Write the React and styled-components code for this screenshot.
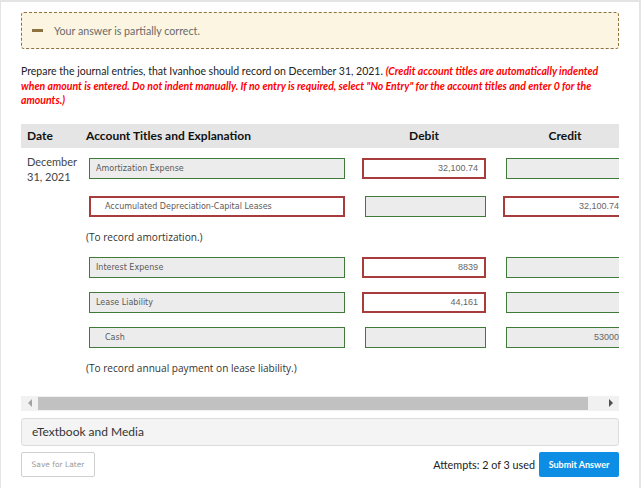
import React from "react";
import styled, { createGlobalStyle } from "styled-components";

const GlobalStyle = createGlobalStyle`
  html, body { margin: 0; padding: 0; background: #fff; }
  body { font-family: Lato, "Liberation Sans", sans-serif; }
  * { box-sizing: border-box; }
`;

const Page = styled.div`
  width: 641px;
  height: 488px;
  border-top: 2px solid #e4e4e4;
  border-left: 1px solid #e4e4e4;
  border-right: 2px solid #e4e4e4;
  padding: 10px 20px 0 20px;
  overflow: hidden;
`;

const Feedback = styled.div`
  height: 37px;
  border: 1px dashed #8e7341;
  border-radius: 3px;
  background: #fcf5e1;
  display: flex;
  align-items: center;
  padding-left: 10px;
`;

const Minus = styled.span`
  display: block;
  width: 11px;
  height: 3px;
  background: #8e7341;
  margin-right: 11px;
`;

const FeedbackText = styled.span`
  font-size: 10.7px;
  color: #6a6a6a;
`;

const Instructions = styled.p`
  margin: 15px 0 0;
  font-size: 10.5px;
  line-height: 14.5px;
  color: #222;
`;

const Warn = styled.em`
  color: #f00;
  font-weight: bold;
`;

const TableClip = styled.div`
  margin-top: 16px;
  width: 598px;
  overflow: hidden;
`;

const Grid = styled.div`
  width: 616px;
`;

const cols = "65px 269px 142px 140px";

const HeaderRow = styled.div`
  display: grid;
  grid-template-columns: ${cols};
  height: 24px;
  align-items: center;
  background: #e5e5e5;
  font-size: 12px;
  font-weight: bold;
  color: #111;
`;

const HeadCell = styled.div`
  padding-left: ${(p) => p.$pl || 0}px;
  padding-right: ${(p) => p.$pr || 0}px;
  text-align: ${(p) => p.$align || "left"};
`;

const Row = styled.div`
  display: grid;
  grid-template-columns: ${cols};
  align-items: start;
  padding-top: ${(p) => p.$pt}px;
`;

const DateCell = styled.div`
  padding: 6px 0 0 6px;
  font-size: 11px;
  line-height: 15px;
  color: #444;
`;

const Cell = styled.div`
  display: flex;
  justify-content: ${(p) => (p.$end ? "flex-end" : "flex-start")};
  padding-top: ${(p) => p.$pt || 0}px;
  padding-right: ${(p) => p.$mr || 0}px;
`;

const Field = styled.div`
  height: 21px;
  display: flex;
  align-items: center;
  border: ${(p) => (p.$wrong ? "2px solid #a83b3b" : "1px solid #3f7a3a")};
  background: ${(p) => (p.$wrong ? "#fff" : "#ececec")};
  white-space: nowrap;
  overflow: hidden;
`;

const AccountField = styled(Field)`
  width: 256px;
  margin-left: 3px;
  padding-left: ${(p) => (p.$indent ? 15 : 6) - (p.$wrong ? 1 : 0)}px;
  font-family: "DejaVu Sans", Verdana, sans-serif;
  font-size: 8px;
  color: #5a5a5a;
`;

const AmountField = styled(Field)`
  width: ${(p) => (p.$wrong ? 124 : 121)}px;
  justify-content: flex-end;
  padding-right: ${(p) => (p.$wrong ? 6 : 7)}px;
  font-family: "Liberation Sans", Arial, sans-serif;
  font-size: 9px;
  color: #666;
`;

const Explanation = styled.div`
  grid-column: 2 / -1;
  padding-top: 12px;
  font-family: "Open Sans", "Liberation Sans", sans-serif;
  font-size: 10.1px;
  line-height: 16px;
  color: #333;
`;

const Scrollbar = styled.div`
  margin-top: 20px;
  height: 15px;
  background: #f1f1f1;
  display: flex;
  align-items: center;
`;

const ArrowBox = styled.div`
  width: ${(p) => p.$w}px;
  height: 15px;
  display: flex;
  align-items: center;
  justify-content: center;
`;

const Arrow = styled.span`
  width: 0;
  height: 0;
  border-top: 4px solid transparent;
  border-bottom: 4px solid transparent;
  ${(p) =>
    p.$dir === "left"
      ? "border-right: 4px solid #a3a3a3;"
      : "border-left: 4px solid #505050;"}
`;

const Thumb = styled.div`
  width: 550px;
  height: 13px;
  background: #c1c1c1;
`;

const Spacer = styled.div`
  flex: 1;
`;

const Media = styled.div`
  margin-top: 7px;
  height: 28px;
  border: 1px solid #dcdcdc;
  border-radius: 3px;
  background: #f4f4f4;
  display: flex;
  align-items: center;
  padding-left: 10px;
  font-size: 12px;
  color: #333;
`;

const Footer = styled.div`
  margin-top: 6px;
  display: flex;
  align-items: center;
  justify-content: space-between;
`;

const SaveButton = styled.button`
  width: 74px;
  height: 25px;
  border: 1px solid #cfcfcf;
  border-radius: 2px;
  background: #fff;
  font-family: "DejaVu Sans", Verdana, sans-serif;
  font-size: 7.5px;
  color: #9a9a9a;
  padding: 0;
`;

const Right = styled.div`
  display: flex;
  align-items: center;
`;

const Attempts = styled.span`
  font-size: 10.8px;
  color: #222;
  margin-right: 4px;
`;

const SubmitButton = styled.button`
  width: 80px;
  height: 25px;
  border: none;
  border-radius: 2px;
  background: #0d8de3;
  color: #fff;
  font-family: Lato, sans-serif;
  font-weight: bold;
  font-size: 9px;
  padding: 0;
`;

export default function App() {
  return (
    <>
      <GlobalStyle />
      <Page>
        <Feedback>
          <Minus />
          <FeedbackText>Your answer is partially correct.</FeedbackText>
        </Feedback>
        <Instructions>
          Prepare the journal entries, that Ivanhoe should record on December 31, 2021.{" "}
          <Warn>
            (Credit account titles are automatically indented when amount is entered. Do not indent
            manually. If no entry is required, select "No Entry" for the account titles and enter 0 for
            the amounts.)
          </Warn>
        </Instructions>
        <TableClip>
          <Grid>
            <HeaderRow>
              <HeadCell $pl={6}>Date</HeadCell>
              <HeadCell>Account Titles and Explanation</HeadCell>
              <HeadCell $align="center" $pl={7} $pr={11}>Debit</HeadCell>
              <HeadCell $align="center" $pl={6} $pr={10}>Credit</HeadCell>
            </HeaderRow>

            <Row $pt={0}>
              <DateCell>
                December
                <br />
                31, 2021
              </DateCell>
              <Cell $pt={10}>
                <AccountField>Amortization Expense</AccountField>
              </Cell>
              <Cell $pt={10} $end $mr={11}>
                <AmountField $wrong>32,100.74</AmountField>
              </Cell>
              <Cell $pt={10} $end $mr={10}>
                <AmountField />
              </Cell>
            </Row>

            <Row $pt={12}>
              <div />
              <Cell>
                <AccountField $wrong $indent>Accumulated Depreciation-Capital Leases</AccountField>
              </Cell>
              <Cell $end $mr={11}>
                <AmountField />
              </Cell>
              <Cell $end $mr={10}>
                <AmountField $wrong>32,100.74</AmountField>
              </Cell>
            </Row>

            <Row $pt={0}>
              <Explanation>(To record amortization.)</Explanation>
            </Row>

            <Row $pt={12}>
              <div />
              <Cell>
                <AccountField>Interest Expense</AccountField>
              </Cell>
              <Cell $end $mr={11}>
                <AmountField $wrong>8839</AmountField>
              </Cell>
              <Cell $end $mr={10}>
                <AmountField />
              </Cell>
            </Row>

            <Row $pt={14}>
              <div />
              <Cell>
                <AccountField>Lease Liability</AccountField>
              </Cell>
              <Cell $end $mr={11}>
                <AmountField $wrong>44,161</AmountField>
              </Cell>
              <Cell $end $mr={10}>
                <AmountField />
              </Cell>
            </Row>

            <Row $pt={14}>
              <div />
              <Cell>
                <AccountField $indent>Cash</AccountField>
              </Cell>
              <Cell $end $mr={11}>
                <AmountField />
              </Cell>
              <Cell $end $mr={10}>
                <AmountField>53000</AmountField>
              </Cell>
            </Row>

            <Row $pt={0}>
              <Explanation>(To record annual payment on lease liability.)</Explanation>
            </Row>
          </Grid>
        </TableClip>

        <Scrollbar>
          <ArrowBox $w={17}>
            <Arrow $dir="left" />
          </ArrowBox>
          <Thumb />
          <Spacer />
          <ArrowBox $w={17}>
            <Arrow $dir="right" />
          </ArrowBox>
        </Scrollbar>

        <Media>eTextbook and Media</Media>

        <Footer>
          <SaveButton>Save for Later</SaveButton>
          <Right>
            <Attempts>Attempts: 2 of 3 used</Attempts>
            <SubmitButton>Submit Answer</SubmitButton>
          </Right>
        </Footer>
      </Page>
    </>
  );
}
